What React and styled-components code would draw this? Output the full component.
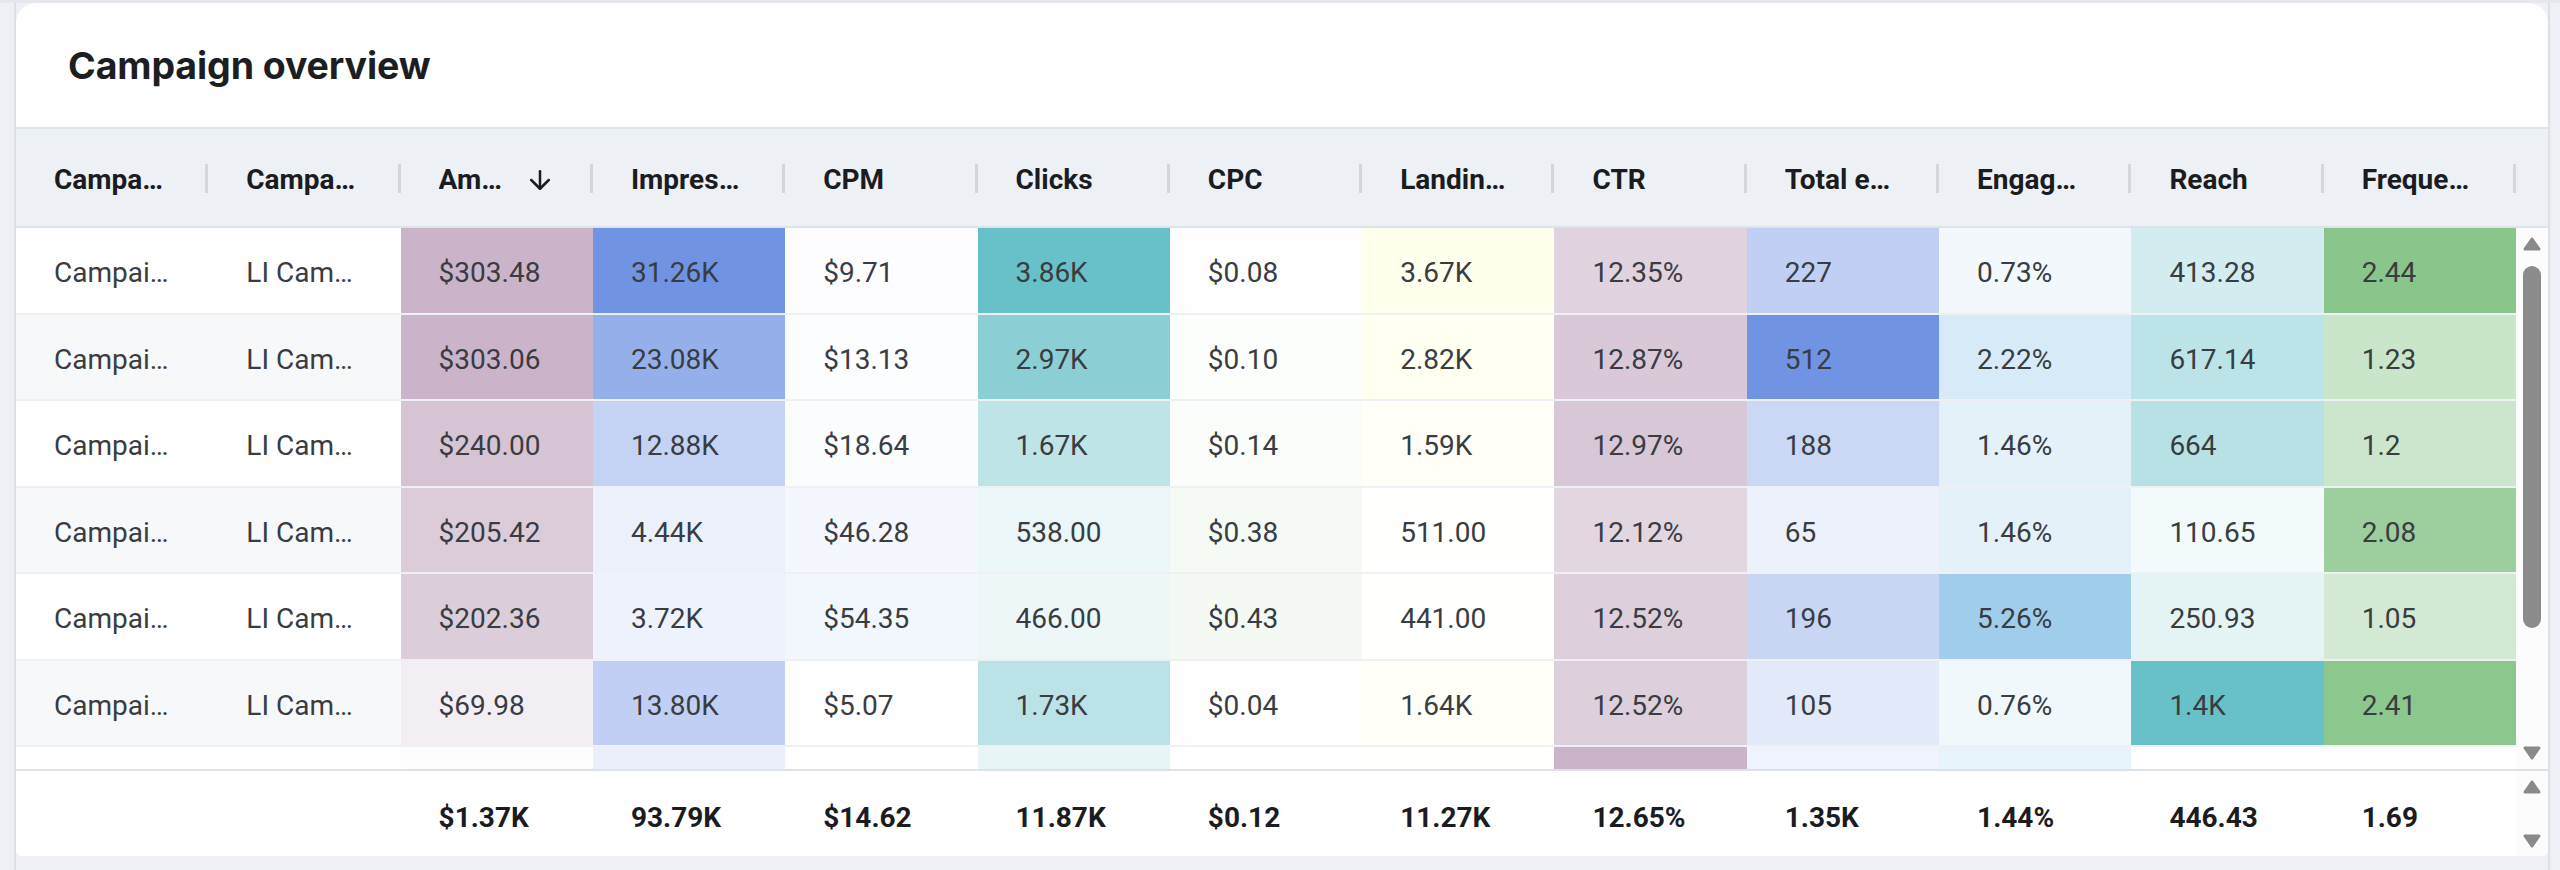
import React from "react";
import styled, { createGlobalStyle } from "styled-components";
import { ArrowDown } from "lucide-react";

const GlobalStyle = createGlobalStyle`
  html, body {
    margin: 0;
    background: #eef0f5;
  }
  body {
    font-family: Roboto, "Liberation Sans", sans-serif;
  }
`;

// Page shell ================
const Screen = styled.div`
  height: 870px;
  box-sizing: border-box;
  border-top: 3px solid #e4e7ee;
  overflow: hidden;
`;

const Page = styled.div`
  height: 867px;
  margin: 0 10px 0 14px;
  border-left: 2px solid #dcdfe6;
  border-right: 2px solid #dcdfe6;
  background: #eef0f5;
`;

const Card = styled.section`
  height: 853px;
  display: flex;
  flex-direction: column;
  background: #fff;
  border-radius: 20px 20px 6px 6px;
  overflow: hidden;
`;

const CardHead = styled.header`
  flex: none;
  height: 124px;
  display: flex;
  align-items: center;
  padding-left: 52px;
`;

const Title = styled.h2`
  margin: 0;
  font-family: Inter, "Liberation Sans", sans-serif;
  font-size: 37.5px;
  font-weight: 700;
  color: #1c1e22;
  letter-spacing: -0.1px;
`;

// Table =====================
const HeadRow = styled.div`
  flex: none;
  display: flex;
  height: 101px;
  box-sizing: border-box;
  border-top: 2px solid #dfe3ea;
  border-bottom: 2px solid #dfe3ea;
  background: #edf0f5;
`;

const Columns = styled.div`
  flex: 1;
  min-width: 0;
  display: grid;
  grid-template-columns: repeat(13, minmax(0, 1fr));
`;

const HeadCell = styled.div`
  min-width: 0;
  display: flex;
  align-items: center;
  padding-left: 38px;
  font-size: 28px;
  font-weight: 700;
  color: #1b1c1f;
`;

const HeadLabel = styled.span`
  flex: 1;
  min-width: 0;
  margin-right: ${(p) => (p.$sorted ? "10px" : "40px")};
  padding-top: 4px;
  overflow: hidden;
  white-space: nowrap;
  text-overflow: ellipsis;
`;

const SortIcon = styled(ArrowDown)`
  flex: none;
  margin: 4px 35px 0 0;
  color: #1b1c1f;
`;

const Divider = styled.span`
  flex: none;
  width: 3px;
  height: 29px;
  margin-top: 2px;
  background: #d3d6dc;
`;

const Gutter = styled.div`
  flex: none;
  width: 32px;
`;

const Body = styled.div`
  flex: none;
  display: flex;
  height: 541px;
`;

const Rows = styled.div`
  flex: 1;
  min-width: 0;
  overflow: hidden;
`;

const Row = styled.div`
  display: grid;
  grid-template-columns: repeat(13, minmax(0, 1fr));
  height: 86.5px;
  box-sizing: border-box;
  border-bottom: 2px solid #eef0f4;
  background: ${(p) => (p.$striped ? "#f7f8fa" : "#fff")};
`;

const Cell = styled.div`
  min-width: 0;
  padding: 5px 38px 0;
  line-height: 79.5px;
  font-size: 28px;
  color: #393c41;
  white-space: nowrap;
  overflow: hidden;
  text-overflow: ellipsis;
  background: ${(p) => p.$bg || "transparent"};
`;

const Footer = styled.div`
  flex: 1;
  display: flex;
  border-top: 2px solid #dde1e8;
`;

const TotalCell = styled(Cell)`
  padding-top: 8px;
  line-height: 77px;
  font-weight: 700;
  color: #1b1c1f;
`;

// Scrollbars ================
const Track = styled.div`
  flex: none;
  width: 32px;
  box-sizing: border-box;
  display: flex;
  flex-direction: column;
  align-items: center;
  justify-content: ${(p) => (p.$split ? "space-between" : "flex-start")};
  padding: ${(p) => (p.$split ? "9px 0 8px" : "9px 0")};
  background: #fcfcfc;
`;

const Thumb = styled.div`
  width: 18px;
  height: 362px;
  margin-top: 14px;
  border-radius: 9px;
  background: #8b8b8b;
`;

const ArrowSvg = styled.svg`
  display: block;
  flex: none;
  margin-top: ${(p) => (p.$push ? "auto" : "0")};
`;

function Triangle({ down, push }) {
  return (
    <ArrowSvg $push={push} width="20" height="15" viewBox="0 0 20 15">
      <path
        d={down ? "M3 3h14l-7 10z" : "M10 2l7 10H3z"}
        fill="#8a8a8a"
        stroke="#8a8a8a"
        strokeWidth="3"
        strokeLinejoin="round"
      />
    </ArrowSvg>
  );
}

// Data ======================
const columns = [
  { label: "Campaign group" },
  { label: "Campaign name" },
  { label: "Amount spent", sorted: true, color: [203, 180, 201] },
  { label: "Impressions", color: [112, 147, 227] },
  { label: "CPM", color: [242, 246, 253] },
  { label: "Clicks", color: [104, 192, 201] },
  { label: "CPC", color: [244, 249, 244] },
  { label: "Landing page clicks", color: [255, 255, 238] },
  { label: "CTR", color: [203, 180, 201], min: 9.78 },
  { label: "Total engagements", color: [112, 147, 227] },
  { label: "Engagement rate", color: [160, 205, 235] },
  { label: "Reach", color: [104, 192, 201] },
  { label: "Frequency", color: [138, 198, 140], min: 0.2 }
];

const rows = [
  ["Campaign group Q3 awareness", "LI Campaign Brand video", "$303.48", "31.26K", "$9.71", "3.86K", "$0.08", "3.67K", "12.35%", "227", "0.73%", "413.28", "2.44"],
  ["Campaign group Q3 awareness", "LI Campaign Carousel ads", "$303.06", "23.08K", "$13.13", "2.97K", "$0.10", "2.82K", "12.87%", "512", "2.22%", "617.14", "1.23"],
  ["Campaign group Lead gen", "LI Campaign Webinar signup", "$240.00", "12.88K", "$18.64", "1.67K", "$0.14", "1.59K", "12.97%", "188", "1.46%", "664", "1.2"],
  ["Campaign group Lead gen", "LI Campaign Ebook download", "$205.42", "4.44K", "$46.28", "538.00", "$0.38", "511.00", "12.12%", "65", "1.46%", "110.65", "2.08"],
  ["Campaign group Retargeting", "LI Campaign Site visitors", "$202.36", "3.72K", "$54.35", "466.00", "$0.43", "441.00", "12.52%", "196", "5.26%", "250.93", "1.05"],
  ["Campaign group Retargeting", "LI Campaign Product demo", "$69.98", "13.80K", "$5.07", "1.73K", "$0.04", "1.64K", "12.52%", "105", "0.76%", "1.4K", "2.41"],
  ["Campaign group Hiring", "LI Campaign Careers page", "$8.52", "4.61K", "$1.85", "620.00", "$0.01", "590.00", "14.03%", "57", "1.31%", "—", "—"]
];

const totals = ["", "", "$1.37K", "93.79K", "$14.62", "11.87K", "$0.12", "11.27K", "12.65%", "1.35K", "1.44%", "446.43", "1.69"];

function parse(text) {
  const n = parseFloat(text.replace(/[$%,]/g, ""));
  if (Number.isNaN(n)) return null;
  return /K$/.test(text) ? n * 1000 : n;
}

const maxima = columns.map((_, i) =>
  Math.max(...rows.map((r) => parse(r[i]) ?? 0))
);

function heat(colIndex, text) {
  const col = columns[colIndex];
  const value = parse(text);
  if (!col.color || value === null) return null;
  const min = col.min ?? 0;
  const t = Math.min(1, Math.max(0, (value - min) / (maxima[colIndex] - min)));
  const mix = col.color.map((c) => Math.round(255 + (c - 255) * t));
  return `rgb(${mix.join(",")})`;
}

export default function App() {
  return (
    <>
      <GlobalStyle />
      <Screen>
        <Page>
          <Card>
            <CardHead>
              <Title>Campaign overview</Title>
            </CardHead>

            <HeadRow>
              <Columns>
                {columns.map((col) => (
                  <HeadCell key={col.label}>
                    <HeadLabel $sorted={col.sorted}>{col.label}</HeadLabel>
                    {col.sorted && <SortIcon size={30} strokeWidth={2} />}
                    <Divider />
                  </HeadCell>
                ))}
              </Columns>
              <Gutter />
            </HeadRow>

            <Body>
              <Rows>
                {rows.map((row, r) => (
                  <Row key={r} $striped={r % 2 === 1}>
                    {row.map((text, c) => (
                      <Cell key={c} $bg={heat(c, text)}>
                        {text}
                      </Cell>
                    ))}
                  </Row>
                ))}
              </Rows>
              <Track>
                <Triangle />
                <Thumb />
                <Triangle down push />
              </Track>
            </Body>

            <Footer>
              <Columns>
                {totals.map((text, c) => (
                  <TotalCell key={c}>{text}</TotalCell>
                ))}
              </Columns>
              <Track $split>
                <Triangle />
                <Triangle down />
              </Track>
            </Footer>
          </Card>
        </Page>
      </Screen>
    </>
  );
}
